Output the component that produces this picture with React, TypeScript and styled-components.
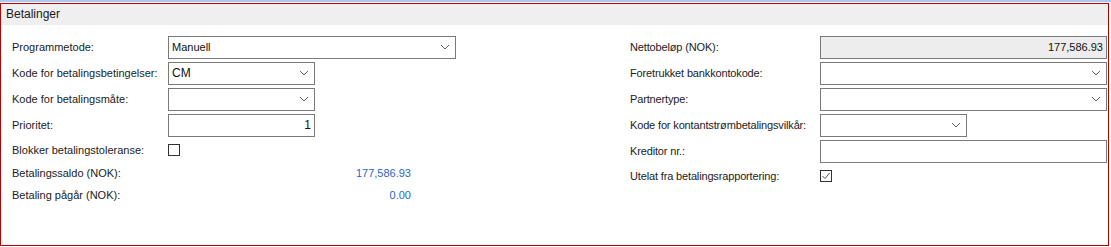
import React, { FC } from "react";
import styled, { createGlobalStyle } from "styled-components";

const GlobalStyle = createGlobalStyle`
  html, body {
    margin: 0;
    padding: 0;
    background: #ffffff;
  }
  body {
    font-family: "Liberation Sans", Arial, sans-serif;
    font-size: 11px;
    color: #1b1b1b;
  }
`;

const TopLine = styled.div`
  height: 2px;
  background: #aac7ef;
  margin-bottom: 1px;
`;

const Panel = styled.section`
  width: 1109px;
  height: 243px;
  box-sizing: border-box;
  border: 1px solid #b80000;
`;

const Header = styled.div`
  height: 21px;
  line-height: 21px;
  padding-left: 5px;
  background: #efefef;
  font-size: 12px;
  color: #1a1a1a;
`;

const Body = styled.div`
  display: grid;
  grid-template-columns: 618px 1fr;
  padding: 9px 1px 0 11px;
`;

const Column = styled.div<{ $labelWidth: number }>`
  display: grid;
  grid-template-columns: ${(p) => p.$labelWidth}px 1fr;
  align-content: start;
`;

const Row = styled.div<{ $h: number }>`
  display: contents;
  & > * {
    height: ${(p) => p.$h}px;
  }
`;

const Label = styled.div<{ $tight?: boolean }>`
  display: flex;
  align-items: center;
  white-space: nowrap;
  letter-spacing: ${(p) => (p.$tight ? "-0.15px" : "0")};
`;

const Cell = styled.div`
  display: flex;
  align-items: center;
`;

const Box = styled.div<{ $w: number; $disabled?: boolean; $big?: boolean }>`
  width: ${(p) => p.$w}px;
  height: 23px;
  box-sizing: border-box;
  border: 1px solid #7a7a7a;
  background: ${(p) => (p.$disabled ? "#ededed" : "#ffffff")};
  display: flex;
  align-items: center;
  padding: 0 3px;
  font-size: ${(p) => (p.$big ? "12px" : "11px")};
  color: #111;
`;

const BoxText = styled.span<{ $right?: boolean }>`
  flex: 1;
  text-align: ${(p) => (p.$right ? "right" : "left")};
  white-space: nowrap;
`;

const Chevron = styled.svg`
  width: 10px;
  height: 6px;
  margin-right: 2px;
  flex-shrink: 0;
`;

const Check = styled.div`
  width: 12px;
  height: 12px;
  box-sizing: border-box;
  border: 1px solid #333;
  background: #fff;
  display: flex;
  align-items: center;
  justify-content: center;
`;

const Amount = styled.div`
  width: 243px;
  text-align: right;
  color: #2b67c8;
`;

const Arrow: FC = () => (
  <Chevron viewBox="0 0 10 6">
    <polyline points="1,1 5,5 9,1" fill="none" stroke="#606060" strokeWidth="1" />
  </Chevron>
);

type BoxProps = { w: number; value?: string; combo?: boolean; right?: boolean; disabled?: boolean; big?: boolean };

const Field: FC<BoxProps> = ({ w, value, combo, right, disabled, big }) => (
  <Box $w={w} $disabled={disabled} $big={big}>
    <BoxText $right={right}>{value}</BoxText>
    {combo && <Arrow />}
  </Box>
);

const CheckBox: FC<{ checked?: boolean }> = ({ checked }) => (
  <Check>
    {checked && (
      <svg width="10" height="10" viewBox="0 0 10 10">
        <polyline points="1.5,5 4,7.5 8.5,2" fill="none" stroke="#555" strokeWidth="1" />
      </svg>
    )}
  </Check>
);

const App: FC = () => {
  return (
    <>
      <GlobalStyle />
      <TopLine />
      <Panel>
        <Header>Betalinger</Header>
        <Body>
          <Column $labelWidth={156}>
            <Row $h={26}>
              <Label>Programmetode:</Label>
              <Cell><Field w={288} value="Manuell" combo /></Cell>
            </Row>
            <Row $h={26}>
              <Label>Kode for betalingsbetingelser:</Label>
              <Cell><Field w={147} value="CM" combo big /></Cell>
            </Row>
            <Row $h={26}>
              <Label>Kode for betalingsmåte:</Label>
              <Cell><Field w={147} combo /></Cell>
            </Row>
            <Row $h={26}>
              <Label>Prioritet:</Label>
              <Cell><Field w={147} value="1" right big /></Cell>
            </Row>
            <Row $h={24}>
              <Label>Blokker betalingstoleranse:</Label>
              <Cell><CheckBox /></Cell>
            </Row>
            <Row $h={22}>
              <Label>Betalingssaldo (NOK):</Label>
              <Cell><Amount>177,586.93</Amount></Cell>
            </Row>
            <Row $h={21}>
              <Label>Betaling pågår (NOK):</Label>
              <Cell><Amount>0.00</Amount></Cell>
            </Row>
          </Column>
          <Column $labelWidth={190}>
            <Row $h={26}>
              <Label $tight>Nettobeløp (NOK):</Label>
              <Cell><Field w={287} value="177,586.93" right disabled /></Cell>
            </Row>
            <Row $h={26}>
              <Label $tight>Foretrukket bankkontokode:</Label>
              <Cell><Field w={287} combo /></Cell>
            </Row>
            <Row $h={26}>
              <Label $tight>Partnertype:</Label>
              <Cell><Field w={287} combo /></Cell>
            </Row>
            <Row $h={26}>
              <Label $tight>Kode for kontantstrømbetalingsvilkår:</Label>
              <Cell><Field w={147} combo /></Cell>
            </Row>
            <Row $h={26}>
              <Label $tight>Kreditor nr.:</Label>
              <Cell><Field w={287} /></Cell>
            </Row>
            <Row $h={24}>
              <Label $tight>Utelat fra betalingsrapportering:</Label>
              <Cell><CheckBox checked /></Cell>
            </Row>
          </Column>
        </Body>
      </Panel>
    </>
  );
};

export default App;
